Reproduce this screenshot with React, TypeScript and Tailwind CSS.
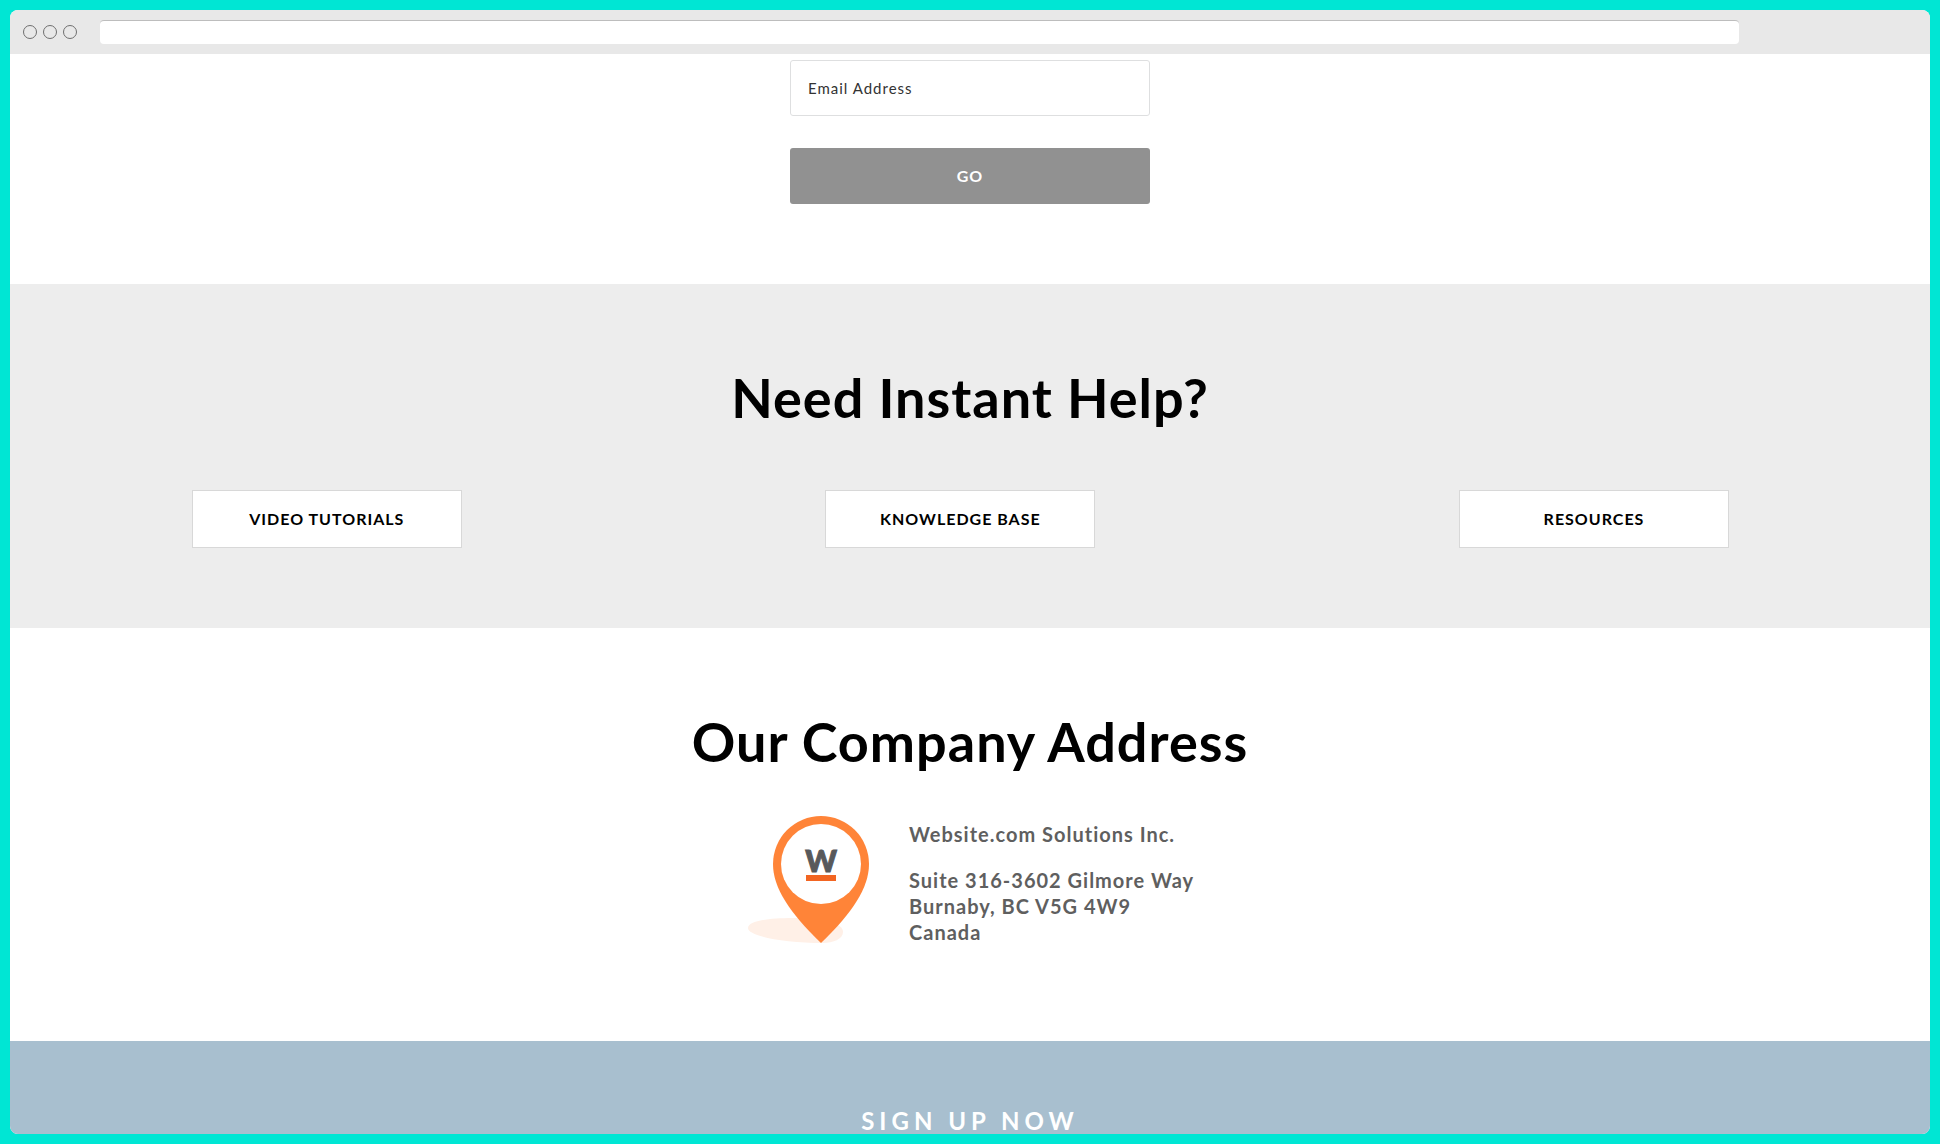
const helpLinks = ["Video Tutorials", "Knowledge Base", "Resources"];

function BrowserBar() {
  return (
    <div className="flex h-11 shrink-0 items-center bg-[#e8e8e8] pl-[13px]">
      <div className="flex gap-[6px]">
        <span className="size-[14px] rounded-full border border-[#6e6e6e]" />
        <span className="size-[14px] rounded-full border border-[#6e6e6e]" />
        <span className="size-[14px] rounded-full border border-[#6e6e6e]" />
      </div>
      <input
        type="text"
        aria-label="Page address"
        className="mr-[10%] ml-[23px] h-6 min-w-0 flex-1 rounded border-t border-[#bdbdbd] bg-white px-2 text-sm outline-none"
      />
    </div>
  );
}

function MapPin() {
  return (
    <svg width="121" height="127" viewBox="0 0 121 127" className="shrink-0" role="img" aria-label="Map pin">
      <path
        d="M0 112C0 105 20 102 45 102C75 102 95 107 95 116C95 123 85 127 75 127C35 127 0 120 0 112Z"
        fill="#fff0e7"
      />
      <path d="M73 0A48 48 0 0 1 121 48C121 72 104 97 73 127C42 97 25 72 25 48A48 48 0 0 1 73 0Z" fill="#ff8438" />
      <circle cx="73" cy="48" r="40" fill="#fff" />
      <text
        x="73"
        y="56"
        textAnchor="middle"
        fontSize="30"
        fontWeight="900"
        fill="#58595b"
        stroke="#58595b"
        strokeWidth="1"
      >
        W
      </text>
      <rect x="58" y="59" width="30" height="6" fill="#f26522" />
    </svg>
  );
}

function SectionTitle({ children }: { children: string }) {
  return (
    <h2 className="text-center text-[54px] leading-[68px] font-bold tracking-[1px] text-black">{children}</h2>
  );
}

export default function App() {
  return (
    <div className="h-screen bg-[#00e6d4] p-[10px] font-['Lato','Open_Sans',sans-serif]">
      <div className="flex h-full flex-col overflow-hidden rounded-lg bg-white">
        <BrowserBar />
        <main className="min-h-0 flex-1 overflow-hidden">
          <form
            className="mx-auto flex w-[360px] max-w-full flex-col gap-8 pt-[6px] pb-20"
            onSubmit={(e) => e.preventDefault()}
          >
            <input
              type="email"
              aria-label="Email Address"
              placeholder="Email Address"
              className="h-14 rounded-[3px] border border-[#dedfe0] px-[17px] text-[15px] tracking-[1px] text-[#333] outline-none placeholder:text-[#333]"
            />
            <button
              type="submit"
              className="h-14 rounded-[3px] bg-[#919191] text-[16px] font-bold tracking-[1px] text-white uppercase"
            >
              Go
            </button>
          </form>

          <section className="bg-[#ededed] py-20">
            <SectionTitle>Need Instant Help?</SectionTitle>
            <div className="mt-[58px] flex">
              {helpLinks.map((label) => (
                <div key={label} className="flex w-[33%] justify-center">
                  <a
                    href="#"
                    className="flex h-[58px] w-[270px] items-center justify-center border border-[#d8d8d8] bg-white text-[16px] font-bold tracking-[1px] text-black uppercase"
                  >
                    {label}
                  </a>
                </div>
              ))}
            </div>
          </section>

          <section className="pt-20 pb-24">
            <SectionTitle>Our Company Address</SectionTitle>
            <div className="mx-auto mt-10 flex w-[444px] max-w-full gap-10">
              <MapPin />
              <address className="mt-[5px] text-[20px] leading-[26px] font-bold tracking-[1px] whitespace-nowrap text-[#5f5f5f] not-italic">
                <p className="mb-5">Website.com Solutions Inc.</p>
                <p>
                  Suite 316-3602 Gilmore Way
                  <br />
                  Burnaby, BC V5G 4W9
                  <br />
                  Canada
                </p>
              </address>
            </div>
          </section>

          <section className="bg-[#a8bfcf] pt-16 pb-20">
            <h3 className="text-center text-[24px] leading-8 font-bold tracking-[5px] text-white uppercase">
              Sign up now
            </h3>
          </section>
        </main>
      </div>
    </div>
  );
}
